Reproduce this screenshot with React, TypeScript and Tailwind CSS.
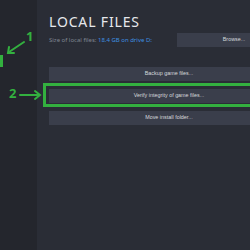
import React from 'react'

const font = { fontFamily: '"Noto Sans", "Open Sans", Arial, sans-serif' }

function Btn({ label, className = '' }: { label: string; className?: string }) {
  return (
    <div
      className={`h-[14px] flex items-center justify-center bg-[#3a3e4b] text-[#d6d8dc] text-[5.4px] leading-none ${className}`}
      style={{ fontFamily: '"Liberation Sans", Arial, sans-serif' }}
    >
      {label}
    </div>
  )
}

export default function App() {
  return (
    <div className="relative w-[250px] h-[250px] overflow-hidden bg-[#2a2d36]" style={font}>
      <div className="flex w-[300px] h-full">
        {/* sidebar */}
        <div className="w-[37px] shrink-0 bg-[#24262d]" />

        {/* content */}
        <div className="flex flex-col w-[252px] pl-[12px] pt-[15px]">
          <h1 className="text-[14px] leading-[14px] tracking-[0.06em] text-[#e6e8ec] font-normal">LOCAL FILES</h1>

          <div className="mt-[4px] flex items-center justify-between h-[14px]">
            <p className="text-[6px] leading-none text-[#7f8591]">
              Size of local files: <span className="text-[#3f8fe0]">18.4 GB on drive D:</span>
            </p>
            <Btn label="Browse..." className="w-[112px] pl-[2px]" />
          </div>

          <div className="mt-[20px] flex flex-col gap-[8px]">
            <Btn label="Backup game files..." />
            <Btn label="Verify integrity of game files..." />
            <Btn label="Move install folder..." />
          </div>
        </div>
      </div>

      {/* annotations */}
      <div className="absolute left-[43px] top-[83px] w-[260px] h-[24px] border-[3px] border-[#33b03f]" />
      <div className="absolute left-0 top-[55px] w-[3px] h-[12px] bg-[#33b03f]" />
      <span className="absolute left-[26px] top-[29px] text-[13px] leading-[14px] font-bold text-[#33b03f]">1</span>
      <span className="absolute left-[9px] top-[86px] text-[13px] leading-[14px] font-bold text-[#33b03f]">2</span>
      <svg className="absolute left-0 top-0" width="60" height="110" viewBox="0 0 60 110">
        <g stroke="#33b03f" strokeWidth="2" fill="none" strokeLinecap="round">
          <line x1="24" y1="42" x2="9" y2="52" />
          <polyline points="9,47 8,53 14,53" />
          <line x1="20" y1="95" x2="39" y2="95" />
          <polyline points="35,91 40,95 35,99" />
        </g>
      </svg>
    </div>
  )
}
